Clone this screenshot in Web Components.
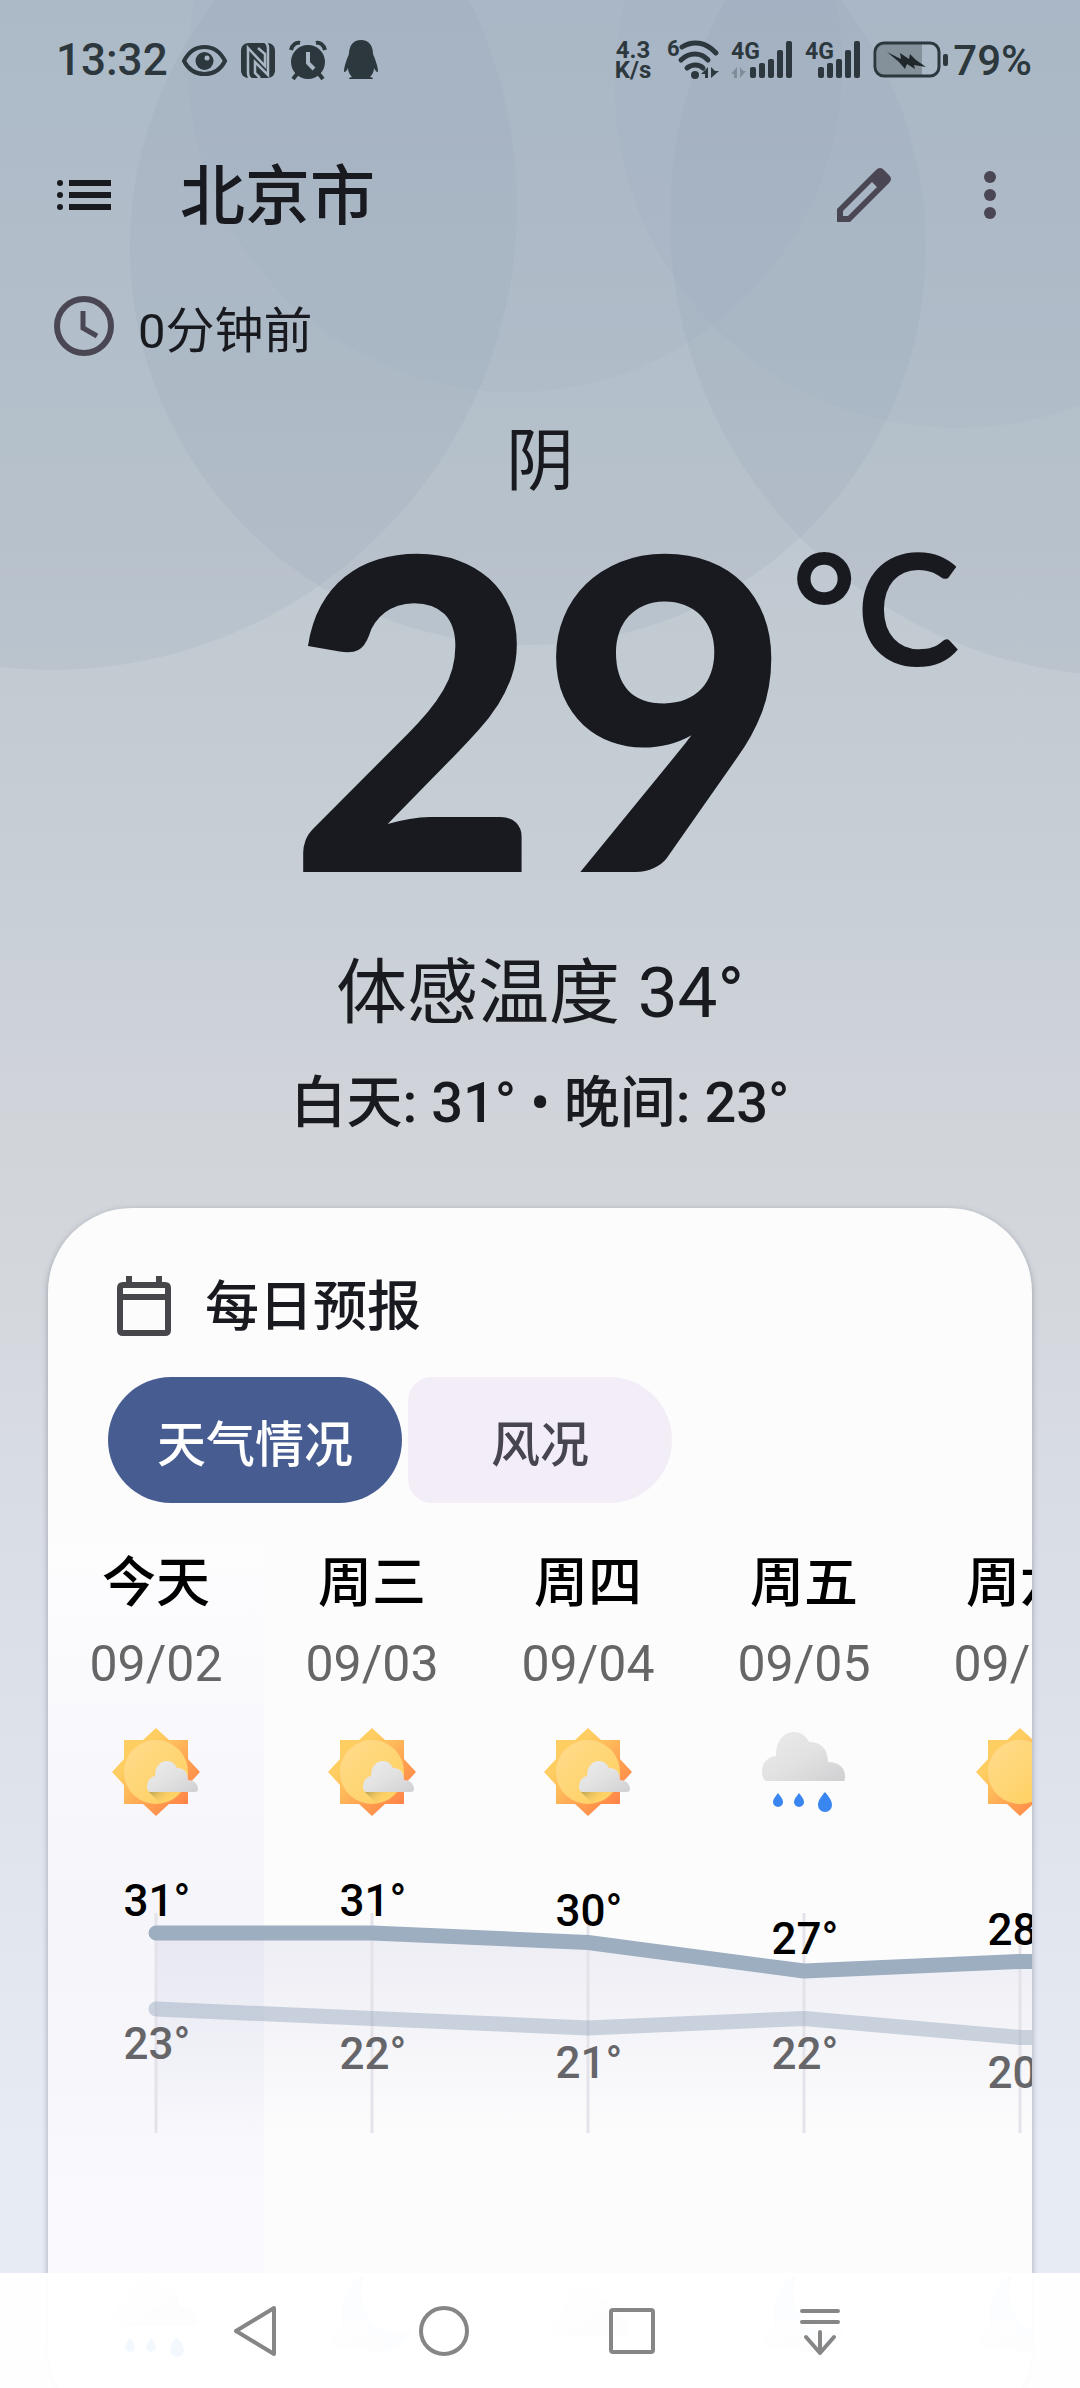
<!DOCTYPE html>
<html lang="zh-CN">
<head>
<meta charset="utf-8">
<meta name="viewport" content="width=device-width, initial-scale=1">
<title>北京市</title>
<style>
  html, body {
    margin: 0;
    height: 100%;
  }

  body {
    font-family: Roboto, "Noto Sans CJK SC", sans-serif;
    color: #191a20;
    overflow: hidden;
  }
</style>
</head>
<body>
<weather-app>
  <status-bar slot="status" time="13:32" battery="79"></status-bar>
  <app-toolbar slot="toolbar">北京市</app-toolbar>
  <current-weather updated="0分钟前" condition="阴" temperature="29">
    <span slot="feels">体感温度 34°</span>
    <span slot="range">白天: 31° • 晚间: 23°</span>
  </current-weather>
  <forecast-card heading="每日预报">
    <tab-chips slot="tabs"></tab-chips>
    <daily-trend></daily-trend>
  </forecast-card>
  <navigation-bar slot="nav"></navigation-bar>
</weather-app>

<script>
// Attach an open root and fill it
function fill(el, html) {
  el.attachShadow({ mode: 'open' }).innerHTML = html;
}

class WeatherApp extends HTMLElement {
  connectedCallback() {
    fill(this, `
      <style>
        :host {
          display: block;
          position: relative;
          height: 100%;
          overflow: hidden;
          background: linear-gradient(#b2bfcb 0%, #bac5ce 16%, #c3cbd2 28%, #c8cfd6 38%, #d0d4da 46%, #d3d7dc 52%, #dce0e9 70%, #e6ebf4 90%, #e6ebf4 100%);
        }

        .sky {
          position: absolute;
          top: 0;
          left: 0;
          width: 100%;
        }

        .scroller {
          position: relative;
          height: 100%;
          overflow: hidden auto;
          scrollbar-width: none;
        }
      </style>
      <svg class="sky" viewBox="0 0 1080 720" fill="#8b9bb2" fill-opacity=".14" aria-hidden="true">
        <circle cx="52" cy="205" r="465"/>
        <circle cx="528" cy="247" r="398"/>
        <circle cx="1128" cy="218" r="458"/>
        <circle cx="515" cy="65" r="327" fill-opacity=".07"/>
        <circle cx="957" cy="86" r="342" fill-opacity=".07"/>
      </svg>
      <div class="scroller">
        <slot name="status"></slot>
        <slot name="toolbar"></slot>
        <main><slot></slot></main>
      </div>
      <slot name="nav"></slot>
    `);
  }
}

class StatusBar extends HTMLElement {
  // Five bars, with the network label above the short ones
  signal(offset, arrows) {
    const tops = [67, 63, 59, 50, 41];
    const bars = tops
      .map((y, i) => `<rect x="${offset + i * 9}" y="${y - 39}" width="6" height="${78 - y}" rx="2"/>`)
      .join('');
    return `
      <svg width="${offset + 43}" height="42" viewBox="0 0 ${offset + 43} 42" fill="currentColor" aria-hidden="true">
        <text x="0" y="20" font-size="23" font-weight="700">4G</text>
        ${arrows ? '<path opacity=".3" d="M6 28v11H3v-4H0zM9 28v11l6-7h-3z"/>' : ''}
        ${bars}
      </svg>`;
  }

  connectedCallback() {
    fill(this, `
      <style>
        :host {
          display: flex;
          align-items: center;
          justify-content: space-between;
          height: 120px;
          padding: 0 48px 0 56px;
          color: #2c383d;
          font-weight: 500;
        }

        .group {
          display: flex;
          align-items: center;
          gap: 14px;
        }

        .group.right { gap: 12px; }
        time { font-size: 44px; }

        svg {
          display: block;
          overflow: visible;
        }

        .speed {
          font-size: 24px;
          font-weight: 700;
          line-height: 20px;
          text-align: center;
          margin-right: 4px;
        }

        .battery {
          display: flex;
          align-items: center;
          gap: 4px;
          font-size: 42px;
        }
      </style>
      <div class="group">
        <time>${this.getAttribute('time')}</time>
        <svg width="45" height="42" viewBox="0 0 45 42" aria-hidden="true">
          <path d="M2 22C7 12 14 8 22.500 8S38 12 43 22C38 32 31 35 22.500 35S7 32 2 22z" fill="none" stroke="currentColor" stroke-width="4"/>
          <circle cx="22.500" cy="22" r="9" fill="currentColor"/>
          <circle cx="25" cy="19" r="2.500" fill="#a9b6c3"/>
        </svg>
        <svg width="34" height="42" viewBox="0 0 34 42" aria-hidden="true">
          <path fill="currentColor" d="M8 4h18c5 0 8 3 8 8v19c0 5-3 8-8 8H8c-5 0-8-3-8-8V12c0-5 3-8 8-8z"/>
          <path fill="none" stroke="#a9b6c3" stroke-width="2.500" d="M10 40C7 38 7 36 7 34V9l17 18V15l-7-6M24 3c3 2 3 4 3 6v27L14 23v11l5 5"/>
        </svg>
        <svg width="38" height="42" viewBox="0 0 38 42" aria-hidden="true">
          <circle cx="19" cy="23" r="17" fill="currentColor"/>
          <path d="M2 11C3 6 7 3 11 4M36 11C35 6 31 3 27 4M8 35l-4 5M30 35l4 5" fill="none" stroke="currentColor" stroke-width="4"/>
          <path d="M19 13v11l6 6" fill="none" stroke="#a9b6c3" stroke-width="4"/>
        </svg>
        <svg width="38" height="42" viewBox="0 0 38 42" aria-hidden="true">
          <path fill="currentColor" d="M20 1c8 0 12 6 12 14 2 5 5 12 5 18-2 0-3-2-4-4 0 4-2 7-4 9 2 0 3 1 3 2H8c0-1 1-2 3-2-2-2-4-5-4-9-1 2-2 4-4 4 0-6 3-13 5-18 0-8 4-14 12-14z"/>
        </svg>
      </div>
      <div class="group right">
        <div class="speed">4.3<br>K/s</div>
        <svg width="52" height="42" viewBox="0 0 52 42" aria-hidden="true">
          <text x="0" y="17" font-size="22" font-weight="700" fill="currentColor">6</text>
          <path d="M15 8C26 1 39 3 49 14M14 21C22 13 34 13 41 21M20 29C25 25 32 25 36 29" fill="none" stroke="currentColor" stroke-width="5" stroke-linecap="round"/>
          <circle cx="28" cy="36" r="4" fill="currentColor"/>
          <path fill="currentColor" d="M41 28v11h-3v-4h-4zM44 28v11l8-7h-4z"/>
        </svg>
        ${this.signal(19, true)}
        ${this.signal(13, false)}
        <div class="battery">
          <svg width="76" height="42" viewBox="0 0 76 42" aria-hidden="true">
            <path d="M11 5h38v31H11c-4 0-7-3-7-7V12c0-4 3-7 7-7z" fill="#84919b"/>
            <rect x="2" y="4" width="64" height="33" rx="9" fill="none" stroke="currentColor" stroke-width="3"/>
            <rect x="70" y="15" width="5" height="12" rx="2" fill="currentColor"/>
            <path d="M14 13l14 7-1-6 9 6 1-5 6 6 10 7-12-2 1 4-8-5-2 5-6-7z" fill="#20282c"/>
          </svg>
          <span>${this.getAttribute('battery')}%</span>
        </div>
      </div>
    `);
  }
}

class AppToolbar extends HTMLElement {
  connectedCallback() {
    fill(this, `
      <style>
        :host {
          display: flex;
          align-items: center;
          height: 150px;
          padding: 0 54px 0 48px;
        }

        button {
          display: block;
          width: 72px;
          height: 72px;
          padding: 0;
          border: 0;
          background: none;
          color: #4a4654;
        }

        button.menu { color: #191a20; }
        svg { display: block; }

        h1 {
          flex: 1;
          margin: 0 0 0 60px;
          padding-top: 4px;
          font-size: 65px;
          line-height: 78px;
          font-weight: 500;
        }

        .actions {
          display: flex;
          gap: 54px;
        }
      </style>
      <button class="menu" aria-label="城市列表">
        <svg width="72" height="72" viewBox="0 0 72 72" fill="currentColor">
          <circle cx="12" cy="24" r="3"/><circle cx="12" cy="36" r="3"/><circle cx="12" cy="48" r="3"/>
          <path d="M21 21h42v6H21zM21 33h42v6H21zM21 45h42v6H21z"/>
        </svg>
      </button>
      <h1><slot></slot></h1>
      <div class="actions">
        <button aria-label="编辑">
          <svg width="72" height="72" viewBox="0 0 72 72" fill="currentColor">
            <path fill-rule="evenodd" d="M9 63V50L48 11q4-4 8 0l5 5q4 4 0 8L22 63zM15 57h5L49 28l-5-5L15 52z"/>
          </svg>
        </button>
        <button aria-label="更多">
          <svg width="72" height="72" viewBox="0 0 72 72" fill="currentColor">
            <circle cx="36" cy="18" r="6"/><circle cx="36" cy="36" r="6"/><circle cx="36" cy="54" r="6"/>
          </svg>
        </button>
      </div>
    `);
  }
}

class CurrentWeather extends HTMLElement {
  connectedCallback() {
    fill(this, `
      <style>
        :host {
          display: flex;
          flex-direction: column;
          align-items: center;
        }

        .updated {
          align-self: stretch;
          display: flex;
          align-items: center;
          gap: 24px;
          height: 112px;
          padding: 0 54px;
          font-size: 49px;
        }

        .condition {
          margin-top: 38px;
          font-size: 68px;
          line-height: 84px;
        }

        .temperature {
          position: relative;
          font-family: Lato, Roboto, sans-serif;
          font-size: 434px;
          line-height: 400px;
          font-weight: 900;
        }

        /* The unit hangs off the number so that the number stays centred */
        .unit {
          position: absolute;
          top: 0;
          left: 100%;
          font-size: 156px;
          line-height: 204px;
          font-weight: 700;
          white-space: nowrap;
        }

        .feels {
          margin-top: 44px;
          font-size: 71px;
          line-height: 90px;
        }

        .range {
          margin-top: 32px;
          font-size: 56px;
          line-height: 66px;
          font-weight: 500;
        }
      </style>
      <div class="updated">
        <svg width="60" height="60" viewBox="0 0 60 60" fill="none" stroke="#4a4654" aria-hidden="true">
          <circle cx="30" cy="30" r="27" stroke-width="6"/>
          <path d="M29 15v17l14 8" stroke-width="5"/>
        </svg>
        <span>${this.getAttribute('updated')}</span>
      </div>
      <div class="condition">${this.getAttribute('condition')}</div>
      <div class="temperature">${this.getAttribute('temperature')}<span class="unit">°C</span></div>
      <div class="feels"><slot name="feels"></slot></div>
      <div class="range"><slot name="range"></slot></div>
    `);
  }
}

class ForecastCard extends HTMLElement {
  connectedCallback() {
    fill(this, `
      <style>
        :host {
          display: block;
          margin: 72px 48px 60px;
          padding: 59px 0 70px;
          border-radius: 84px;
          background: #fcfcfd;
          box-shadow: 0 2px 6px rgba(40, 50, 70, .35);
          overflow: hidden;
        }

        header {
          display: flex;
          align-items: center;
          gap: 34px;
          height: 78px;
          padding: 0 69px;
        }

        h2 {
          margin: 0;
          padding-top: 4px;
          font-size: 54px;
          line-height: 78px;
          font-weight: 500;
        }
      </style>
      <header>
        <svg width="54" height="60" viewBox="0 0 54 60" fill="#47464b" aria-hidden="true">
          <path fill-rule="evenodd" d="M9 0h6v6h24V0h6v6h3q6 0 6 6v42q0 6-6 6H6q-6 0-6-6V12q0-6 6-6h3zM6 12v6h42v-6zM6 24v30h42V24z"/>
        </svg>
        <h2>${this.getAttribute('heading')}</h2>
      </header>
      <slot name="tabs"></slot>
      <slot></slot>
    `);
  }
}

class TabChips extends HTMLElement {
  connectedCallback() {
    fill(this, `
      <style>
        :host {
          display: flex;
          gap: 6px;
          margin-top: 32px;
          padding: 0 60px;
        }

        button {
          height: 126px;
          border: 0;
          font: 500 49px Roboto, "Noto Sans CJK SC", sans-serif;
          color: #47464f;
          background: #f3edf7;
          border-radius: 24px 63px 63px 24px;
          padding: 0 83px;
        }

        button[aria-selected="true"] {
          color: #fff;
          background: #475d92;
          border-radius: 63px;
          padding: 0 49px;
        }
      </style>
      <button role="tab" aria-selected="true">天气情况</button>
      <button role="tab" aria-selected="false">风况</button>
    `);
    const tabs = this.shadowRoot.querySelectorAll('button');
    tabs.forEach(tab => tab.addEventListener('click', () => {
      tabs.forEach(t => t.setAttribute('aria-selected', t === tab));
    }));
  }
}

class WeatherIcon extends HTMLElement {
  drawing(kind) {
    if (kind === 'sunny' || kind === 'partly') {
      return `
        <path d="M44 0l13 12h19v19l12 13-12 13v19H57L44 88 31 76H12V57L0 44l12-13V12h19z" fill="url(#rays)"/>
        <circle cx="44" cy="44" r="32" fill="url(#sun)"/>
        ${kind === 'partly' ? `
          <path d="M37 64h32L54 78q-4-1-6-3z" fill="url(#shade)"/>
          <path d="M39 64q-4 0-4-5c0-6 3-10 8-11 0-9 5-15 12-15 5 0 8 3 10 7 7 0 11 4 11 12 6 0 10 4 10 9 0 2-1 3-3 3z" fill="url(#cloud)"/>` : ''}`;
    }
    if (kind === 'rain') {
      return `
        <path d="M6 53q-4-2-4-9c0-9 5-15 14-16C16 14 23 4 34 4c7 0 12 4 15 10 12 0 19 7 19 20 11 0 17 6 17 14 0 2 0 4-1 5z" fill="url(#cloud)"/>
        <g fill="#3a86f0">
          <path d="M18 65c3 4 5 6 5 9a5 5 0 0 1-10 0c0-3 2-5 5-9zM39 65c3 4 5 6 5 9a5 5 0 0 1-10 0c0-3 2-5 5-9zM65 64c5 6 7 9 7 13a7 7 0 0 1-14 0c0-4 2-7 7-13z"/>
        </g>`;
    }
    if (kind === 'cloud') {
      return '<path d="M10 64q-4-2-4-8c0-9 5-14 13-15C19 25 27 14 40 14c9 0 14 4 17 12 12 0 18 7 18 17 8 1 10 7 10 13q0 6-4 8z" fill="url(#cloud)"/>';
    }
    return `
      <path d="M36 2C28 42 46 66 84 58 74 78 52 84 34 76 8 62 4 20 36 2z" fill="#bcd4f4"/>
      <path d="M4 76q-4-16 12-20 6-18 22-8 4 8 6 14 12 2 10 14z" fill="url(#cloud)"/>`;
  }

  connectedCallback() {
    fill(this, `
      <style>
        :host { display: block; }
        svg { display: block; }
      </style>
      <svg width="88" height="88" viewBox="0 0 88 88" aria-hidden="true">
        <defs>
          <linearGradient id="rays" x1="0" y1="0" x2="1" y2="1">
            <stop offset=".3" stop-color="#ffce62"/><stop offset=".85" stop-color="#ff8447"/>
          </linearGradient>
          <linearGradient id="sun" x1="0" y1="0" x2="1" y2="1">
            <stop offset="0" stop-color="#ffdb8e"/><stop offset="1" stop-color="#ffd05c"/>
          </linearGradient>
          <linearGradient id="cloud" x1="0" y1="0" x2="1" y2="1">
            <stop offset="0" stop-color="#ebebec"/><stop offset=".5" stop-color="#e2e2e3"/><stop offset="1" stop-color="#d0d0d2"/>
          </linearGradient>
          <linearGradient id="shade" x1="0" y1="0" x2="1" y2=".5">
            <stop offset="0" stop-color="#b5a050"/><stop offset=".7" stop-color="#ffc95c" stop-opacity="0"/>
          </linearGradient>
        </defs>
        ${this.drawing(this.getAttribute('kind'))}
      </svg>
    `);
  }
}

class DailyTrend extends HTMLElement {
  constructor() {
    super();
    this._columnWidth = 216;
    this._days = [
      { name: '今天', date: '09/02', day: 'partly', night: 'rain', high: 31, low: 23 },
      { name: '周三', date: '09/03', day: 'partly', night: 'moon', high: 31, low: 22 },
      { name: '周四', date: '09/04', day: 'partly', night: 'cloud', high: 30, low: 21 },
      { name: '周五', date: '09/05', day: 'rain', night: 'moon', high: 27, low: 22 },
      { name: '周六', date: '09/06', day: 'sunny', night: 'moon', high: 28, low: 20 }
    ];
  }

  x(i) {
    return this._columnWidth * (i + 0.5);
  }

  y(temp) {
    return 93 + (31 - temp) * 9.5;
  }

  // Points of one line, carried on flat to the end of the last column
  line(key) {
    const end = this._days[this._days.length - 1];
    const points = this._days.map((d, i) => `${this.x(i)},${this.y(d[key])}`);
    points.push(`${this._days.length * this._columnWidth},${this.y(end[key])}`);
    return points.join(' ');
  }

  chart() {
    const days = this._days;
    const width = days.length * this._columnWidth;

    return `
      <svg width="${width}" height="300" viewBox="0 0 ${width} 300">
        <defs>
          <linearGradient id="area" gradientUnits="userSpaceOnUse" x1="0" y1="93" x2="0" y2="293">
            <stop offset="0" stop-color="#8f93bd" stop-opacity=".14"/>
            <stop offset="1" stop-color="#8f93bd" stop-opacity="0"/>
          </linearGradient>
        </defs>
        <polygon points="${this.line('high')} ${width},293 ${this.x(0)},293" fill="url(#area)"/>
        ${days.map((d, i) => `<line x1="${this.x(i)}" x2="${this.x(i)}" y1="73" y2="293" stroke="#e4e3e9" stroke-width="3"/>`).join('')}
        <g fill="none" stroke-width="15" stroke-linecap="round" stroke-linejoin="round">
          <polyline points="${this.line('low')}" stroke="#9daec1" stroke-opacity=".5"/>
          <polyline points="${this.line('high')}" stroke="#9daec1"/>
        </g>
        <g font-size="44" font-weight="500" text-anchor="middle">
          ${days.map((d, i) => `
            <text x="${this.x(i) + 1}" y="${this.y(d.high) - 17}" fill="#000">${d.high}°</text>
            <text x="${this.x(i) + 1}" y="${this.y(d.low) + 50}" fill="#66666a">${d.low}°</text>`).join('')}
        </g>
      </svg>`;
  }

  connectedCallback() {
    fill(this, `
      <style>
        :host {
          display: block;
          margin-top: 41px;
          overflow: auto hidden;
          scrollbar-width: none;
        }

        .track {
          width: max-content;
          background: linear-gradient(#fdfdfe, #f9f9fd 22%, #f5f5fa 45%, #f6f6fb 65%, #f9f9fe 80%, #f9f9fe) 0 0 / ${this._columnWidth}px 100% no-repeat;
        }

        .row {
          display: grid;
          grid-template-columns: repeat(${this._days.length}, ${this._columnWidth}px);
          justify-items: center;
          text-align: center;
        }

        .name {
          font-size: 54px;
          line-height: 80px;
          font-weight: 500;
          color: #000;
        }

        .date {
          font-size: 50px;
          line-height: 80px;
          color: #666;
          margin-bottom: 24px;
        }

        .night { margin-top: 133px; }

        svg {
          display: block;
          margin-top: 24px;
        }
      </style>
      <div class="track">
        <div class="row">
          ${this._days.map(d => `
            <div>
              <div class="name">${d.name}</div>
              <div class="date">${d.date}</div>
            </div>`).join('')}
        </div>
        <div class="row">
          ${this._days.map(d => `<weather-icon kind="${d.day}"></weather-icon>`).join('')}
        </div>
        ${this.chart()}
        <div class="row night">
          ${this._days.map(d => `<weather-icon kind="${d.night}"></weather-icon>`).join('')}
        </div>
      </div>
    `);
  }
}

class NavigationBar extends HTMLElement {
  connectedCallback() {
    fill(this, `
      <style>
        /* Floats over the end of the scrolled content */
        :host {
          position: absolute;
          left: 0;
          right: 0;
          bottom: 0;
          display: flex;
          justify-content: center;
          height: 115px;
          padding-right: 4px;
          background: rgba(255, 255, 255, .94);
        }

        button {
          display: grid;
          place-items: center;
          width: 188px;
          padding: 0;
          border: 0;
          background: none;
        }

        svg {
          width: 52px;
          height: 52px;
          fill: none;
          stroke: #868686;
          stroke-width: 4;
          stroke-linecap: round;
          stroke-linejoin: round;
        }
      </style>
      <button aria-label="返回"><svg viewBox="0 0 52 52"><path d="M6 26L44 3v46z"/></svg></button>
      <button aria-label="主页"><svg viewBox="0 0 52 52"><circle cx="26" cy="26" r="23"/></svg></button>
      <button aria-label="最近任务"><svg viewBox="0 0 52 52"><rect x="5" y="5" width="42" height="42" rx="2"/></svg></button>
      <button aria-label="通知"><svg viewBox="0 0 52 52"><path d="M8 6h36M8 17h36M26 27v21M12 32l14 16 14-16"/></svg></button>
    `);
  }
}

customElements.define('weather-app', WeatherApp);
customElements.define('status-bar', StatusBar);
customElements.define('app-toolbar', AppToolbar);
customElements.define('current-weather', CurrentWeather);
customElements.define('forecast-card', ForecastCard);
customElements.define('tab-chips', TabChips);
customElements.define('weather-icon', WeatherIcon);
customElements.define('daily-trend', DailyTrend);
customElements.define('navigation-bar', NavigationBar);
</script>
</body>
</html>
